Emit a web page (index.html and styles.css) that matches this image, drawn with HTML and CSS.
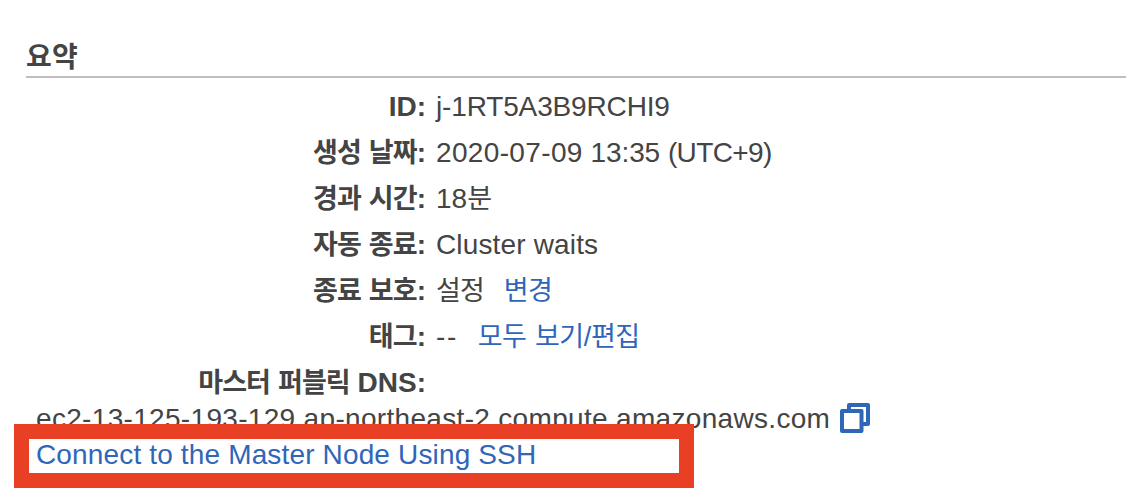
FILE: index.html
```
<!DOCTYPE html>
<html lang="ko">
<head>
    <meta charset="UTF-8">
    <meta name="viewport" content="width=device-width, initial-scale=1.0">
    <title>요약</title>
    <link rel="stylesheet" href="styles.css">
</head>
<body>
    <div class="summary">
        <h2>요약</h2>
        <dl>
            <div class="row"><dt>ID:</dt><dd class="id">j-1RT5A3B9RCHI9</dd></div>
            <div class="row"><dt><span class="ko">생성 날짜</span>:</dt><dd><span class="date">2020-07-09</span> <span class="time">13:35</span> <span class="zone">(UTC+9)</span></dd></div>
            <div class="row"><dt><span class="ko">경과 시간</span>:</dt><dd>18<span class="ko">분</span></dd></div>
            <div class="row"><dt><span class="ko">자동 종료</span>:</dt><dd class="text">Cluster waits</dd></div>
            <div class="row"><dt><span class="ko">종료 보호</span>:</dt><dd><span class="ko">설정</span> <a href="#" class="ko">변경</a></dd></div>
            <div class="row"><dt><span class="ko">태그</span>:</dt><dd><span class="empty">--</span> <a href="#" class="ko">모두 보기/편집</a></dd></div>
            <div class="row"><dt><span class="ko">마스터 퍼블릭</span> DNS:</dt><dd></dd></div>
        </dl>
        <div class="dns">
            <span class="host">ec2-13-125-193-129.ap-northeast-2.compute.amazonaws.com</span>
            <svg class="copy" width="30" height="30" viewBox="0 0 30 30" fill="none" stroke="#2f66b8" stroke-width="4" stroke-linejoin="round">
                <path d="M9 7V2H28V21H23"/>
                <path d="M2 8H21.5V28H2Z"/>
            </svg>
        </div>
        <div class="connect">
            <a href="#" class="text">Connect to the Master Node Using SSH</a>
            <div class="highlight"></div>
        </div>
    </div>
</body>
</html>
```
FILE: styles.css
```
body {
    margin: 0;
    background: #fff;
    color: #444;
    font-family: "Liberation Sans", "Noto Sans CJK KR", sans-serif;
    font-size: 28px;
}
.summary {
    box-sizing: border-box;
    height: 500px;
    padding: 36px 12px 0 26px;
}
h2 {
    box-sizing: border-box;
    margin: 0;
    height: 42px;
    padding-top: 3px;
    line-height: 38px;
    font-size: 28px;
    letter-spacing: 0.3px;
    border-bottom: 2px solid #bfbfbf;
}
dl {
    margin: 0;
    padding-top: 6px;
}
.row {
    display: flex;
    height: 46px;
    line-height: 46px;
    white-space: nowrap;
}
dt {
    width: 400px;
    text-align: right;
    font-weight: bold;
}
dd {
    margin: 0 0 0 10px;
}
a {
    color: #2f66b8;
    text-decoration: none;
}
dd a {
    margin-left: 12px;
}
.ko {
    font-size: 27px;
    letter-spacing: -0.9px;
    word-spacing: 1.3px;
}
dd a.ko {
    letter-spacing: -0.4px;
}
.id {
    letter-spacing: -0.15px;
}
.date {
    letter-spacing: 0.35px;
}
.time {
    letter-spacing: -0.1px;
}
.zone {
    letter-spacing: -0.6px;
}
.empty {
    letter-spacing: 1.6px;
}
.text {
    letter-spacing: 0.15px;
}
.host {
    padding-top: 2px;
    letter-spacing: 0.32px;
}
.dns {
    display: flex;
    align-items: center;
    height: 32px;
    margin-top: -4px;
    padding-left: 10px;
}
.copy {
    margin-left: 10px;
}
.connect {
    position: relative;
    height: 38px;
    line-height: 41px;
    padding-left: 10px;
}
.highlight {
    position: absolute;
    left: -12px;
    top: -10px;
    width: 650px;
    height: 34px;
    border: 15px solid #e83f25;
}
```
